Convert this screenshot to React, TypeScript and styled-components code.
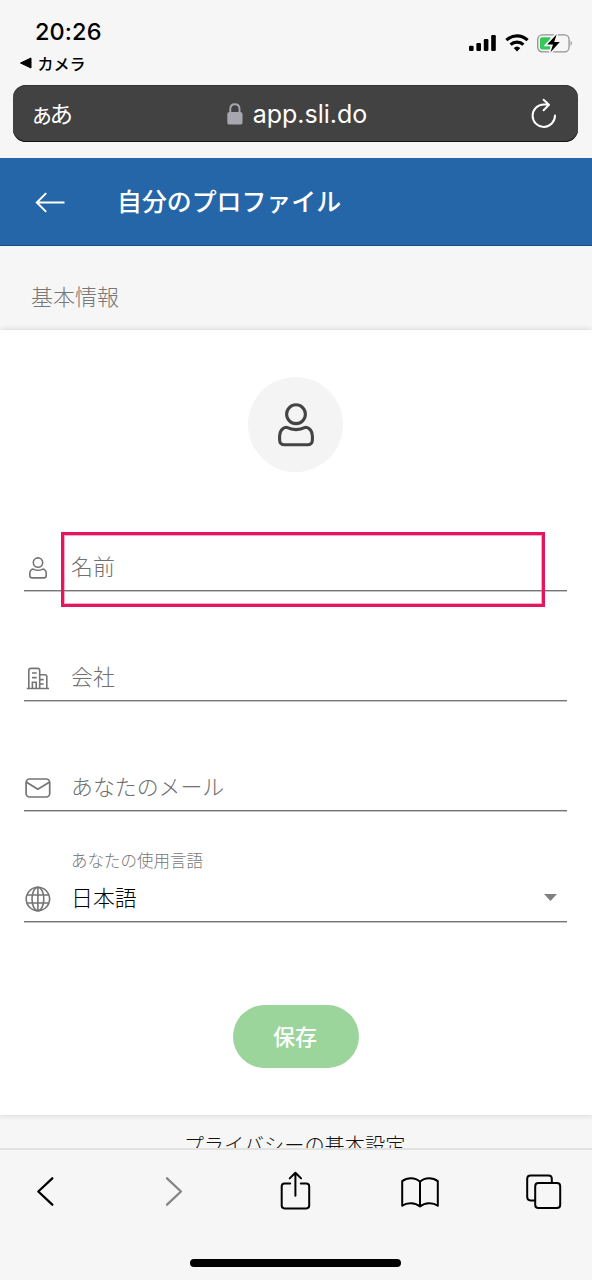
import React from "react";
import styled, { createGlobalStyle } from "styled-components";

const GlobalStyle = createGlobalStyle`
  * { box-sizing: border-box; }
  body {
    margin: 0;
    background: #f6f6f6;
    font-family: "Noto Sans CJK JP", sans-serif;
  }
  svg { display: block; flex: none; overflow: visible; }
`;

const Screen = styled.div`
  width: 592px;
  height: 1280px;
  display: flex;
  flex-direction: column;
  overflow: hidden;
  background: #f6f6f6;
`;

const StatusBar = styled.div`
  height: 85px;
  flex: none;
  display: flex;
  justify-content: space-between;
  padding: 17px 19px 0 20px;
`;

const StatusLeft = styled.div`
  display: flex;
  flex-direction: column;
`;

const Clock = styled.div`
  padding-left: 15px;
  font: 500 23.5px/30px Inter, sans-serif;
  letter-spacing: 0.1px;
  color: #000;
`;

const BackToApp = styled.div`
  display: flex;
  align-items: center;
  gap: 5.5px;
  font-size: 16px;
  font-weight: 500;
  line-height: 32px;
  color: #000;
`;

const StatusIcons = styled.div`
  display: flex;
  gap: 8.5px;
  height: 20px;
  margin-top: 17px;
`;

const AddressBar = styled.div`
  height: 57px;
  flex: none;
  margin: 0 14px 0 13px;
  padding: 0 21px 0 17px;
  display: grid;
  grid-template-columns: 62px 1fr 58px;
  align-items: center;
  border-radius: 13px;
  background: #424242;
  box-shadow: inset 0 -1px 0 #111, inset 0 1px 0 #333;
  color: #fff;
`;

const TextSize = styled.div`
  padding-bottom: 2px;
  font-size: 23.5px;
  line-height: 32px;
  letter-spacing: -4px;
  white-space: nowrap;
`;

const Host = styled.div`
  display: flex;
  align-items: center;
  justify-content: center;
  gap: 10px;
  padding-left: 3px;
  font: 400 25px/32px Inter, sans-serif;
`;

const Reload = styled.div`
  display: flex;
  justify-content: flex-end;
`;

const AppHeader = styled.header`
  height: 88px;
  flex: none;
  margin-top: 16px;
  padding-left: 35px;
  display: flex;
  align-items: center;
  gap: 51px;
  background: #2466a8;
  border-bottom: 1px solid #15497f;
  color: #fff;
`;

const Title = styled.h1`
  margin: 0;
  padding-bottom: 3px;
  font-size: 24.9px;
  line-height: 36px;
  font-weight: 500;
`;

const SectionTitle = styled.div`
  height: 84px;
  flex: none;
  padding: 33px 31px 0;
  font-size: 22px;
  line-height: 32px;
  font-weight: 300;
  color: #777;
`;

const Card = styled.main`
  height: 785px;
  flex: none;
  display: flex;
  flex-direction: column;
  align-items: center;
  padding: 47px 25px 0 24px;
  background: #fff;
  box-shadow: 0 0 6px rgba(0, 0, 0, 0.16);
`;

const Avatar = styled.div`
  width: 95px;
  height: 95px;
  display: flex;
  align-items: center;
  justify-content: center;
  border-radius: 50%;
  background: #f4f4f4;
  color: #444;
`;

const Fields = styled.div`
  width: 100%;
  padding-top: 9px;
  display: grid;
  grid-template-rows: 110px 110px 110px 111px;
`;

const Field = styled.div`
  position: relative;
  display: grid;
  grid-template-columns: 47px 1fr auto;
  grid-template-rows: 1fr 26px 45px;
  border-bottom: 1px solid #747474;
  box-shadow: 0 1px 0 #c6c6c6;
`;

const FieldIcon = styled.div<{ $inset?: number }>`
  grid-column: 1;
  grid-row: 3;
  display: flex;
  align-items: center;
  width: 28px;
  padding-left: ${(p) => p.$inset ?? 0}px;
  color: #747474;
`;

const FieldLabel = styled.div`
  grid-column: 2;
  grid-row: 2;
  font-size: 16.5px;
  line-height: 20px;
  font-weight: 300;
  color: #777;
`;

const FieldText = styled.div<{ $filled?: boolean }>`
  grid-column: 2;
  grid-row: 3;
  font-size: 21.9px;
  line-height: 42px;
  font-weight: 300;
  color: ${(p) => (p.$filled ? "#000" : "#707070")};
`;

const Caret = styled.div`
  grid-column: 3;
  grid-row: 3;
  padding: 18px 10px 0 0;
`;

const Highlight = styled.div`
  position: absolute;
  left: 37px;
  top: 51px;
  width: 484px;
  height: 75px;
  border: 3px solid #e3165f;
  box-shadow: inset 0 0 0 1px rgba(240, 70, 130, 0.45);
`;

const SaveButton = styled.button`
  width: 126px;
  height: 63px;
  margin-top: 83px;
  padding: 0 1px 4px 0;
  border: 0;
  border-radius: 32px;
  background: #9bd59b;
  color: #fff;
  font: 500 22px/32px "Noto Sans CJK JP", sans-serif;
`;

const Privacy = styled.div`
  height: 33px;
  flex: none;
  overflow: hidden;
  padding: 15px 3px 0 0;
  text-align: center;
  font-size: 20.2px;
  line-height: 30px;
  font-weight: 300;
  color: #111;
`;

const Toolbar = styled.nav`
  height: 132px;
  flex: none;
  display: flex;
  flex-direction: column;
  align-items: center;
  justify-content: space-between;
  padding: 21px 28px 13px 26px;
  border-top: 2px solid #e2e2e2;
  background: #f6f6f6;
`;

const ToolbarIcons = styled.div`
  width: 100%;
  display: flex;
  justify-content: space-between;
`;

const HomeIndicator = styled.div`
  width: 211px;
  height: 8px;
  border-radius: 4px;
  background: #000;
`;

const PersonIcon = ({ width, height, stroke }: { width: number; height: number; stroke: number }) => (
  <svg width={width} height={height} viewBox="0 0 36 44" fill="none" stroke="currentColor" strokeWidth={stroke} strokeLinejoin="round">
    <circle cx="18" cy="11.2" r="9.4" />
    <path d="M8 24.2C9.4 24.2 10.7 26.6 18 26.6S26.6 24.2 28 24.2C31.5 24.5 34.4 28.5 34.4 33V37C34.4 40 32.3 41.8 29.5 41.8H6.5C3.7 41.8 1.6 40 1.6 37V33C1.6 28.5 4.5 24.5 8 24.2Z" />
  </svg>
);

const BuildingIcon = () => (
  <svg width="28" height="24" viewBox="0 0 28 24" fill="none" stroke="currentColor" strokeWidth="1.6">
    <path d="M2.8 22.5H25M4.8 22V4.6Q4.8 2.4 7 2.4H13.5Q15.7 2.4 15.7 4.6V22M15.7 8.7H21Q22.8 8.7 22.8 10.5V22" />
    <path d="M8 7H12.7M8 11.6H12.7M16 13.6H19.7M16 18H19.7M8.4 22V16.3H12.2V22" />
  </svg>
);

const MailIcon = () => (
  <svg width="28" height="24" viewBox="0 0 28 24" fill="none" stroke="currentColor" strokeWidth="1.7">
    <rect x="2.1" y="3" width="23.6" height="18" rx="3.5" />
    <path d="M2.6 6.2L13.8 13.2L25.3 6.2" />
  </svg>
);

const GlobeIcon = () => (
  <svg width="28" height="26" viewBox="0 0 28 26" fill="none" stroke="currentColor" strokeWidth="1.6">
    <circle cx="13.9" cy="13" r="11.7" />
    <ellipse cx="13.9" cy="13" rx="5.9" ry="11.7" />
    <path d="M13.9 1.5V24.5M3 9H24.8M3 17H24.8" />
  </svg>
);

const SignalIcon = () => (
  <svg width="27" height="17" viewBox="0 0 27 17">
    <rect x="0" y="11.7" width="4.6" height="5.3" rx="1.2" />
    <rect x="7.4" y="9" width="4.6" height="8" rx="1.2" />
    <rect x="14.8" y="5" width="4.6" height="12" rx="1.2" />
    <rect x="22.2" y="1" width="4.6" height="16" rx="1.2" />
  </svg>
);

const WifiIcon = () => (
  <svg width="24" height="18" viewBox="0 0 24 18" fill="none" stroke="#000" strokeWidth="3.1">
    <path d="M1.4 6.2A15.2 15.2 0 0 1 22.6 6.2" />
    <path d="M5.6 10.7A9.2 9.2 0 0 1 18.4 10.7" />
    <path d="M8.7 14A4.8 4.8 0 0 1 15.3 14L12 17.4Z" fill="#000" stroke="none" />
  </svg>
);

const BatteryIcon = () => (
  <svg width="36" height="19" viewBox="0 0 36 19">
    <rect x="0.7" y="0.8" width="31.4" height="17" rx="4.6" fill="none" stroke="#929292" strokeWidth="1.3" />
    <path d="M33.6 6.8Q36.2 9.3 33.6 11.9Z" fill="#929292" />
    <path d="M5 3.2H13.5V15.4H5Q3 15.4 3 13.4V5.2Q3 3.2 5 3.2Z" fill="#34c759" />
    <path d="M19.7 -0.2L9.8 10.8H15.8L13.3 18.8L23.2 7.9H17.2Z" stroke="#f6f6f6" strokeWidth="3" />
    <path d="M19.7 0.2L10.2 10.6H16L13.5 18.3L22.8 8H17.2Z" />
  </svg>
);

const LockIcon = () => (
  <svg width="16" height="22" viewBox="0 0 16 22">
    <path d="M3.3 10V6Q3.3 1.3 7.9 1.3T12.5 6V10" fill="none" stroke="#a8a7b0" strokeWidth="1.9" />
    <rect x="0.3" y="9" width="15.2" height="12.6" rx="2.2" fill="#a8a7b0" />
  </svg>
);

const ReloadIcon = () => (
  <svg width="26" height="30" viewBox="0 0 26 30" fill="none" stroke="#fff" strokeWidth="2" strokeLinecap="round" strokeLinejoin="round">
    <path d="M24 16.6A11.2 11.2 0 1 1 12.8 5.5H17.5M12.6 0.7L18 5.7L12.6 11.3" />
  </svg>
);

const ArrowLeftIcon = () => (
  <svg width="31" height="22" viewBox="0 0 31 22" fill="none" stroke="#fff" strokeWidth="2">
    <path d="M29.5 11.5H2M11.2 2.1L1.8 11.5L11.2 20.9" />
  </svg>
);

const ToolIcon = ({ d, color = "#000", stroke = 2 }: { d: string; color?: string; stroke?: number }) => (
  <svg width="40" height="40" viewBox="0 0 40 40" fill="none" stroke={color} strokeWidth={stroke} strokeLinecap="round" strokeLinejoin="round">
    <path d={d} />
  </svg>
);

const tools = [
  { name: "back", d: "M26.3 7.3L12.3 20.5L26.3 33.7", stroke: 2.3 },
  { name: "forward", d: "M16 7.3L30 20.5L16 33.7", stroke: 2.3, color: "#858585" },
  { name: "share", d: "M15.2 12.5H9.5Q6.7 12.5 6.7 15.3V34.6Q6.7 37.4 9.5 37.4H31.4Q34.2 37.4 34.2 34.6V15.3Q34.2 12.5 31.4 12.5H25.8M20.4 24.7V1.8M14.7 7.4L20.4 1.8L26.1 7.4" },
  { name: "bookmarks", d: "M20 10.7C15 6 7 6.3 2.2 10.1V34.8C7 31.1 15 31.3 20 35.5C25 31.3 33 31.1 37.8 34.8V10.1C33 6.3 25 6 20 10.7ZM20 10.7V35.5" },
  { name: "tabs", d: "M10.5 29.4H6.5Q3.2 29.4 3.2 26.1V7.8Q3.2 4.5 6.5 4.5H24.5Q27.8 4.5 27.8 7.8V11.8M14.5 12.1H32.9Q36.2 12.1 36.2 15.4V33.8Q36.2 37.1 32.9 37.1H14.5Q11.2 37.1 11.2 33.8V15.4Q11.2 12.1 14.5 12.1Z" },
];

export default function App() {
  return (
    <Screen>
      <GlobalStyle />
      <StatusBar>
        <StatusLeft>
          <Clock>20:26</Clock>
          <BackToApp>
            <svg width="12" height="12" viewBox="0 0 12 12">
              <path d="M0.5 6L11 1V11Z" stroke="#000" strokeLinejoin="round" />
            </svg>
            カメラ
          </BackToApp>
        </StatusLeft>
        <StatusIcons>
          <SignalIcon />
          <WifiIcon />
          <BatteryIcon />
        </StatusIcons>
      </StatusBar>
      <AddressBar>
        <TextSize>ぁあ</TextSize>
        <Host>
          <LockIcon />
          app.sli.do
        </Host>
        <Reload>
          <ReloadIcon />
        </Reload>
      </AddressBar>
      <AppHeader>
        <ArrowLeftIcon />
        <Title>自分のプロファイル</Title>
      </AppHeader>
      <SectionTitle>基本情報</SectionTitle>
      <Card>
        <Avatar>
          <PersonIcon width={36} height={44} stroke={3.1} />
        </Avatar>
        <Fields>
          <Field>
            <FieldIcon $inset={5}>
              <PersonIcon width={18} height={22} stroke={3.2} />
            </FieldIcon>
            <FieldText>名前</FieldText>
            <Highlight />
          </Field>
          <Field>
            <FieldIcon>
              <BuildingIcon />
            </FieldIcon>
            <FieldText>会社</FieldText>
          </Field>
          <Field>
            <FieldIcon>
              <MailIcon />
            </FieldIcon>
            <FieldText>あなたのメール</FieldText>
          </Field>
          <Field>
            <FieldLabel>あなたの使用言語</FieldLabel>
            <FieldIcon>
              <GlobeIcon />
            </FieldIcon>
            <FieldText $filled>日本語</FieldText>
            <Caret>
              <svg width="13" height="7" viewBox="0 0 13 7">
                <path d="M0 0H13L6.5 7Z" fill="#808080" />
              </svg>
            </Caret>
          </Field>
        </Fields>
        <SaveButton>保存</SaveButton>
      </Card>
      <Privacy>プライバシーの基本設定</Privacy>
      <Toolbar>
        <ToolbarIcons>
          {tools.map(({ name, ...icon }) => (
            <ToolIcon key={name} {...icon} />
          ))}
        </ToolbarIcons>
        <HomeIndicator />
      </Toolbar>
    </Screen>
  );
}
